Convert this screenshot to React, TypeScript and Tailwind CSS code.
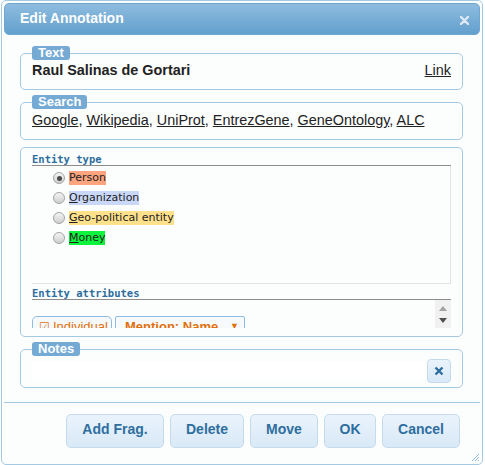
import React from "react";

const Legend = ({ children }: { children: React.ReactNode }) => (
  <legend className="rounded-[3px] bg-[#74aad4] px-[6px] text-[13px] font-bold leading-[14px] text-white">
    {children}
  </legend>
);

const Radio = ({ checked }: { checked?: boolean }) => (
  <span className="flex h-[12px] w-[12px] items-center justify-center rounded-full border border-[#a3a3a3] bg-gradient-to-b from-[#f4f4f4] to-[#cfcfcf]">
    {checked && <span className="h-[5px] w-[5px] rounded-full bg-[#4a4a4a]" />}
  </span>
);

const types = [
  { label: "Person", bg: "bg-[#ffa47e]", key: false, checked: true },
  { label: "Organization", bg: "bg-[#c9d8f8]", key: true },
  { label: "Geo-political entity", bg: "bg-[#ffe18b]", key: true },
  { label: "Money", bg: "bg-[#0cf43c]", key: true },
];

const links = ["Google", "Wikipedia", "UniProt", "EntrezGene", "GeneOntology", "ALC"];

const buttons = [
  { label: "Add Frag.", w: "w-[98px]" },
  { label: "Delete", w: "w-[74px]" },
  { label: "Move", w: "w-[68px]" },
  { label: "OK", w: "w-[52px]" },
  { label: "Cancel", w: "w-[78px]" },
];

export default function App() {
  return (
    <div className="h-[465px] w-[485px] bg-white font-['Liberation_Sans',Arial,sans-serif] text-[#222]">
      <div className="ml-[1px] flex h-[465px] w-[482px] flex-col rounded-[5px] border border-[#a6c9e2] bg-[#fcfdfd] p-[2px]">
        {/* title bar */}
        <div className="flex h-[32px] items-center justify-between rounded-[5px] border border-[#6fa6d2] bg-gradient-to-b from-[#8ebcdf] to-[#62a0cd] pb-[2px] pl-[15px] pr-[10px]">
          <span className="text-[14px] font-bold text-white">Edit Annotation</span>
          <svg width="9" height="9" viewBox="0 0 9 9" className="mt-[4px]">
            <path d="M1 1 L8 8 M8 1 L1 8" stroke="#dfeaf4" strokeWidth="2.4" strokeLinecap="round" />
          </svg>
        </div>

        <div className="flex flex-col pl-[16px]">
          {/* Text */}
          <fieldset className="mt-[11px] w-[443px] rounded-[5px] border border-[#a6c9e2] px-[11px] pb-[10px] pt-[2px]">
            <Legend>Text</Legend>
            <div className="flex items-center justify-between text-[14.4px] leading-[17px]">
              <span className="font-bold">Raul Salinas de Gortari</span>
              <a className="underline">Link</a>
            </div>
          </fieldset>

          {/* Search */}
          <fieldset className="mt-[5px] w-[443px] rounded-[5px] border border-[#a6c9e2] px-[11px] pb-[10px] pt-[3px]">
            <Legend>Search</Legend>
            <div className="text-[14.4px] leading-[17px]">
              {links.map((l, i) => (
                <React.Fragment key={l}>
                  <a className="underline">{l}</a>
                  {i < links.length - 1 && ", "}
                </React.Fragment>
              ))}
            </div>
          </fieldset>

          {/* Entity type / attributes */}
          <div className="mt-[7px] w-[443px] rounded-[5px] border border-[#a6c9e2] px-[11px] pb-[8px] pt-[5px]">
            <div className="border-b border-[#8c8c8c] font-['DejaVu_Sans_Mono',monospace] text-[10.5px] font-bold leading-[12px] text-[#2e6e9e]">
              Entity type
            </div>
            <div className="h-[118px] border-b border-r border-[#e3e3e3] pl-[21px] pt-[2px] font-['DejaVu_Sans',sans-serif] text-[11px] text-[#222]">
              {types.map((t) => (
                <div key={t.label} className="flex h-[20px] items-center gap-[4px]">
                  <Radio checked={t.checked} />
                  <span className={`${t.bg} leading-[14px]`}>
                    {t.key ? (
                      <>
                        <span className="underline">{t.label[0]}</span>
                        {t.label.slice(1)}
                      </>
                    ) : (
                      t.label
                    )}
                  </span>
                </div>
              ))}
            </div>
            <div className="mt-[3px] border-b border-[#8c8c8c] font-['DejaVu_Sans_Mono',monospace] text-[10.5px] font-bold leading-[12px] text-[#2e6e9e]">
              Entity attributes
            </div>
            <div className="flex h-[28px]">
              <div className="flex flex-1 items-start gap-[3px] overflow-hidden pt-[16px]">
                <div className="flex h-[22px] w-[80px] items-center gap-[3px] rounded-[5px] border border-[#8fbde1] bg-[#f5f9fc] pl-[6px] text-[13px] text-[#e17009]">
                  <span className="text-[12px]">☑</span>
                  <span>Individual</span>
                </div>
                <div className="flex h-[22px] w-[130px] items-center justify-between rounded-[2px] border border-[#8fbde1] bg-[#f7fafd] pl-[9px] pr-[5px] text-[13px] font-bold text-[#e17009]">
                  <span>Mention: Name</span>
                  <span className="text-[9px]">▼</span>
                </div>
              </div>
              <div className="flex w-[16px] flex-col items-center bg-[#f1f1f1] pt-[6px]">
                <svg width="8" height="5" viewBox="0 0 8 5">
                  <path d="M0 5 L4 0 L8 5 Z" fill="#a3a3a3" />
                </svg>
                <svg width="8" height="5" viewBox="0 0 8 5" className="mt-[7px]">
                  <path d="M0 0 L8 0 L4 5 Z" fill="#505050" />
                </svg>
              </div>
            </div>
          </div>

          {/* Notes */}
          <fieldset className="mt-[5px] w-[443px] rounded-[5px] border border-[#a6c9e2] px-[11px] pb-[4px] pt-[3px]">
            <Legend>Notes</Legend>
            <div className="flex items-center gap-[2px]">
              <div className="h-[18px] flex-1 bg-white" />
              <button className="flex h-[24px] w-[24px] items-center justify-center rounded-[4px] border border-[#c5dbec] bg-gradient-to-b from-[#eaf3fc] to-[#d9e9f7]">
                <svg width="10" height="10" viewBox="0 0 10 10">
                  <path d="M1.5 1.5 L8.5 8.5 M8.5 1.5 L1.5 8.5" stroke="#2e6e9e" strokeWidth="2.4" />
                </svg>
              </button>
            </div>
          </fieldset>
        </div>

        {/* button pane */}
        <div className="relative mt-[14px] flex flex-1 items-start justify-end gap-[6px] border-t border-[#a6c9e2] pr-[20px] pt-[11px]">
          {buttons.map((b) => (
            <button
              key={b.label}
              className={`${b.w} h-[34px] rounded-[5px] border border-[#c5dbec] bg-gradient-to-b from-[#eaf3fc] to-[#d9e9f7] pb-[3px] text-[14px] font-bold text-[#2e6e9e]`}
            >
              {b.label}
            </button>
          ))}
          <svg width="9" height="9" viewBox="0 0 9 9" className="absolute bottom-[0px] right-[0px]">
            <path d="M8 1 L1 8 M8 4 L4 8 M8 7 L7 8" stroke="#8fb4d4" strokeWidth="1" />
          </svg>
        </div>
      </div>
    </div>
  );
}
